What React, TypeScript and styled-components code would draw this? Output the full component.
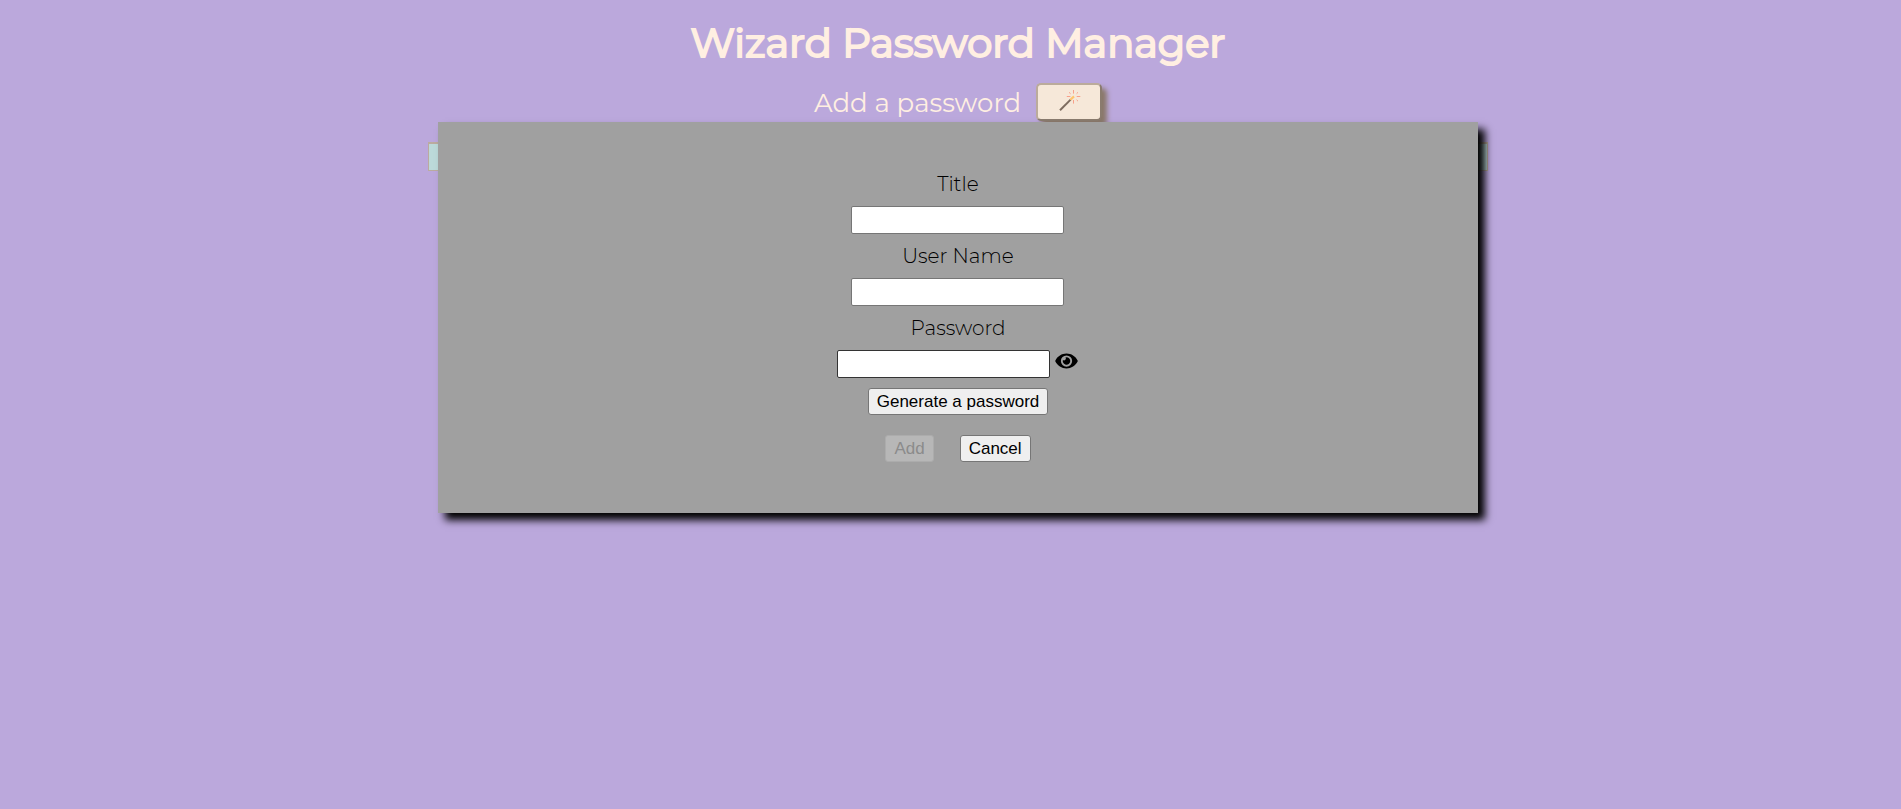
import React, { useState } from "react";
import styled, { createGlobalStyle } from "styled-components";
import { FaEye, FaEyeSlash } from "react-icons/fa";

const GlobalStyle = createGlobalStyle`
  *, *::before, *::after { box-sizing: border-box; }
  body {
    margin: 0;
    background: #bba8dc;
    color: #000;
    font-family: Montserrat, Inter, sans-serif;
  }
`;

const Page = styled.div`
  position: relative;
  display: flex;
  flex-direction: column;
  align-items: center;
  min-height: 100vh;
  padding: 16px 0 0 15px;
`;

const Title = styled.h1`
  margin: 0;
  color: #ffefe2;
  font-size: 40px;
  font-weight: 400;
  line-height: 54px;
  -webkit-text-stroke: 2px #ffefe2;
`;

const AddBar = styled.div`
  display: flex;
  align-items: flex-start;
  gap: 15px;
  margin-top: 13px;
  color: #ffefe2;
  font-size: 26px;
  font-weight: 400;
  line-height: 40px;
`;

const WandButton = styled.button`
  display: flex;
  align-items: center;
  justify-content: center;
  width: 66px;
  height: 38px;
  padding: 0;
  border: 2px solid;
  border-color: #bbab9b #8a7b6e #8a7b6e #bbab9b;
  border-radius: 5px;
  background: #f6e8d9;
  box-shadow: 5px 5px 5px #8a7869;
`;

const Stage = styled.main`
  position: relative;
  width: 56.2%;
  min-width: 320px;
  margin-top: 19px;
`;

const Entry = styled.div`
  height: 29px;
  border: 1px solid #bbab9f;
  border-top-width: 2px;
  background: #bcd9d9;
`;

const Modal = styled.form`
  position: absolute;
  top: -20px;
  left: 10px;
  right: 10px;
  display: flex;
  flex-direction: column;
  align-items: center;
  padding: 50px 0;
  background: #a0a0a0;
  box-shadow: 7px 7px 8px #000;
`;

const Field = styled.div`
  display: flex;
  flex-direction: column;
  align-items: center;
  gap: 10px;
  margin-bottom: 10px;
`;

const Label = styled.label`
  font-size: 20px;
  font-weight: 300;
  line-height: 24px;
`;

const Input = styled.input<{ $strong?: boolean }>`
  width: 213px;
  height: 28px;
  padding: 1px 4px;
  border: 1px solid ${(p) => (p.$strong ? "#333" : "#767676")};
  border-radius: 2px;
  background: #fff;
  font: 16px "Liberation Sans", sans-serif;
`;

const PasswordRow = styled.div`
  display: flex;
  align-items: flex-start;
  gap: 5px;
`;

const EyeButton = styled.button`
  display: flex;
  align-items: center;
  width: 23px;
  height: 22px;
  padding: 0;
  border: 0;
  background: none;
  color: #000;

  svg { width: 23px; height: 20px; }
`;

const Button = styled.button`
  height: 27px;
  padding: 0 8px;
  border: 1px solid #767676;
  border-radius: 3px;
  background: #efefef;
  color: #000;
  font: 17px "Liberation Sans", Arial, sans-serif;

  &:disabled {
    border-color: #acacac;
    background: #b7b7b7;
    color: #8b8b8b;
  }
`;

const Actions = styled.div`
  display: flex;
  gap: 26px;
  margin: 20px 0 1px;
`;

const Wand = () => (
  <svg width="24" height="24" viewBox="0 0 24 24" fill="none" aria-hidden="true">
    <path d="M3 20.3 13.6 9.6" stroke="#7d6c5f" strokeWidth="2" />
    <path d="M13.4 9.8 17 6.4" stroke="#ffc46b" strokeWidth="2.2" />
    <path
      d="M16.5 0v3.6M16.5 10v3.6M9.8 6.5h3.6M19.7 6.5h3.6M12 2.3l1.6 1.5M21 2.3l-1.4 1.4M19.6 9.8 21 11.2"
      stroke="#f8a08a"
      strokeWidth="1"
    />
  </svg>
);

export default function App() {
  const [title, setTitle] = useState("");
  const [user, setUser] = useState("");
  const [password, setPassword] = useState("");
  const [visible, setVisible] = useState(false);
  const [open, setOpen] = useState(true);

  const generate = () =>
    setPassword(Array.from({ length: 12 }, () => Math.floor(Math.random() * 36).toString(36)).join(""));

  return (
    <>
      <GlobalStyle />
      <Page>
        <Title>Wizard Password Manager</Title>
        <AddBar>
          <span id="add-text">Add a password</span>
          <WandButton type="button" aria-labelledby="add-text" onClick={() => setOpen(true)}>
            <Wand />
          </WandButton>
        </AddBar>
        <Stage>
          <Entry />
          {open && (
            <Modal onSubmit={(e) => e.preventDefault()}>
              <Field>
                <Label htmlFor="title">Title</Label>
                <Input id="title" value={title} onChange={(e) => setTitle(e.target.value)} />
              </Field>
              <Field>
                <Label htmlFor="user">User Name</Label>
                <Input id="user" value={user} onChange={(e) => setUser(e.target.value)} />
              </Field>
              <Field>
                <Label htmlFor="password">Password</Label>
                <PasswordRow>
                  <Input
                    $strong
                    id="password"
                    type={visible ? "text" : "password"}
                    value={password}
                    onChange={(e) => setPassword(e.target.value)}
                  />
                  <EyeButton type="button" aria-label="Show password" onClick={() => setVisible(!visible)}>
                    {visible ? <FaEyeSlash /> : <FaEye />}
                  </EyeButton>
                </PasswordRow>
              </Field>
              <Button type="button" onClick={generate}>Generate a password</Button>
              <Actions>
                <Button type="submit" disabled={!title || !user || !password}>Add</Button>
                <Button type="button" onClick={() => setOpen(false)}>Cancel</Button>
              </Actions>
            </Modal>
          )}
        </Stage>
      </Page>
    </>
  );
}
